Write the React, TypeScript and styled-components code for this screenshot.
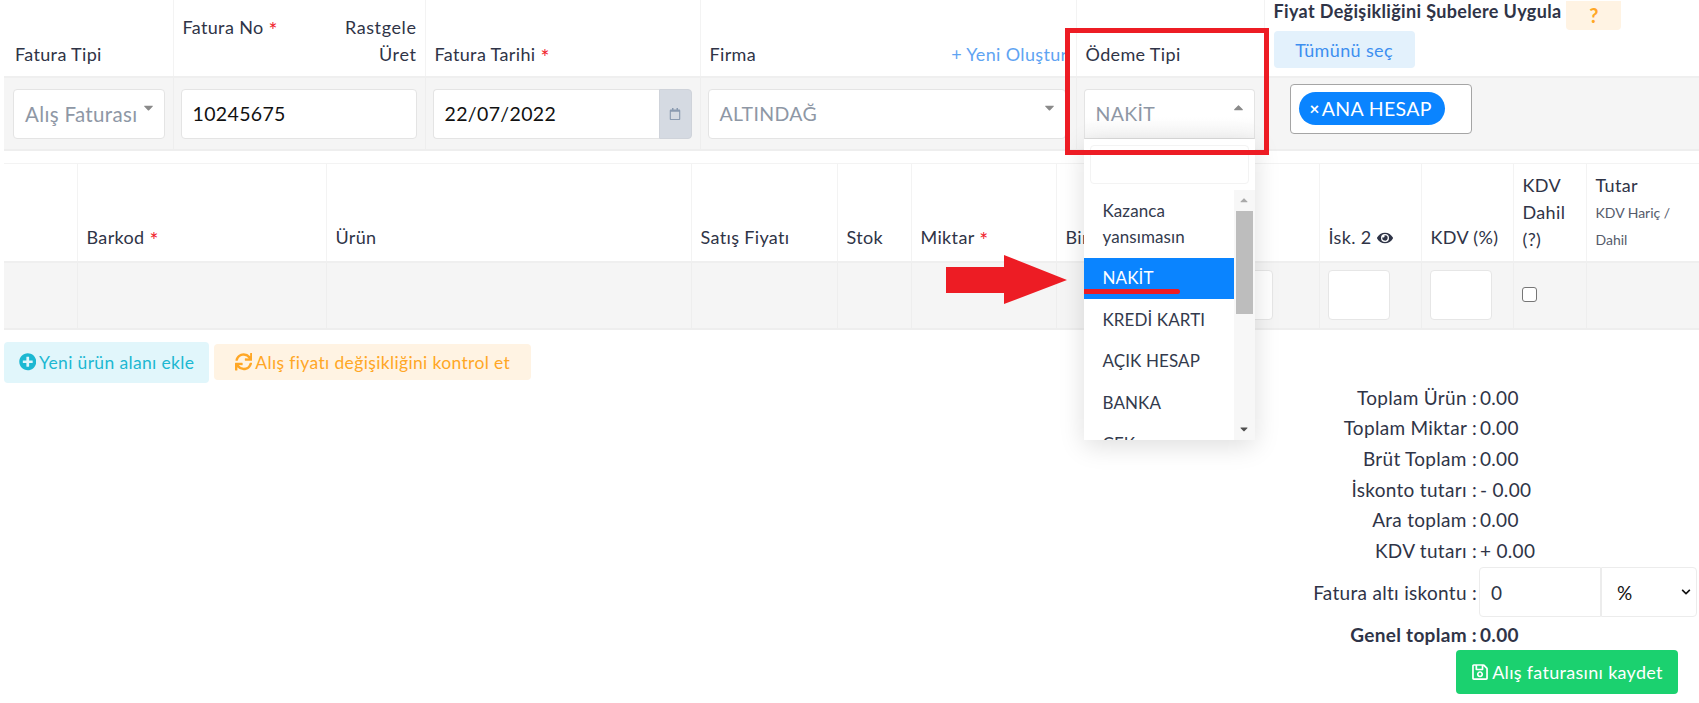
import React from 'react';
import styled, { createGlobalStyle } from 'styled-components';
import { FaPlusCircle, FaSync, FaEye, FaRegSave, FaRegCalendar, FaCaretDown, FaCaretUp, FaChevronDown } from 'react-icons/fa';

const GlobalStyle = createGlobalStyle`
    html, body {
        margin: 0;
        height: 703px;
        overflow: hidden;
        background: #fff;
    }
    body {
        font-family: 'Lato', 'Noto Sans', sans-serif;
        font-size: 17.5px;
        letter-spacing: 0.35px;
        color: #2f3447;
    }
    * { box-sizing: border-box; }
`
const Page = styled.div`
    position: relative;
    width: 1699px;
    height: 703px;
    padding-left: 4px;
`
const Table = styled.table<{ $mt?: number }>`
    table-layout: fixed;
    width: 1695px;
    border-collapse: collapse;
    margin-top: ${p => p.$mt ?? 0}px;
`
const HeadCell = styled.th<{ $h: number; $pb?: number; $noTop?: boolean }>`
    height: ${p => p.$h}px;
    padding: 0 8px ${p => p.$pb ?? 8}px 9px;
    text-align: left;
    vertical-align: bottom;
    font-weight: 400;
    font-size: 18px;
    line-height: 27px;
    border-left: 1px solid #f3f3f3;
    border-top: ${p => (p.$noTop ? 'none' : '1px solid #f3f3f3')};
    border-bottom: 2px solid #efefef;
    &:first-child {
        border-left: none;
        padding-left: 11px;
    }
`
const BodyCell = styled.td<{ $h: number; $pl?: number }>`
    height: ${p => p.$h}px;
    padding: 0 0 0 ${p => p.$pl ?? 7}px;
    background: #f5f5f5;
    border-left: 1px solid #eeeeee;
    border-bottom: 2px solid #eeeeee;
    vertical-align: middle;
    &:first-child {
        border-left: none;
        padding-left: 9px;
    }
`
const Req = styled.span`
    color: #f0212b;
    font-size: 21px;
    line-height: 0;
    vertical-align: -4px;
`
const Between = styled.div`
    display: flex;
    justify-content: space-between;
`
const FaturaNoHead = styled(Between)`
    align-items: flex-start;
    & > span:last-child { text-align: right; letter-spacing: 0.6px; }
`
const YeniLink = styled.span`
    color: #5fa4f2;
    white-space: nowrap;
`
const FieldBox = styled.div<{ $w: number; $fs?: number }>`
    position: relative;
    width: ${p => p.$w}px;
    height: 50px;
    background: #fff;
    border: 1px solid #e4e4e4;
    border-radius: 4px;
    display: flex;
    align-items: center;
    padding-left: 11px;
    font-size: ${p => p.$fs ?? 19.5}px;
    color: #111;
`
const SelectBox = styled(FieldBox)<{ $open?: boolean }>`
    color: #8e97a5;
    white-space: nowrap;
    background: ${p => (p.$open ? 'linear-gradient(#fff 55%, #f6f6f6)' : '#fff')};
    border-bottom-color: ${p => (p.$open ? '#dcdcdc' : '#e4e4e4')};
    border-radius: ${p => (p.$open ? '4px 4px 0 0' : '4px')};
`
const Caret = styled.span`
    position: absolute;
    right: 8px;
    top: 10px;
    font-size: 15px;
    line-height: 15px;
    color: #8a8a8a;
`
const DateGroup = styled.div`
    display: flex;
    width: 259px;
    height: 50px;
`
const DateInput = styled(FieldBox)`
    border-radius: 4px 0 0 4px;
    border-right: none;
    flex: 1;
`
const DateAddon = styled.div`
    width: 33px;
    background: #d5dae2;
    border: 1px solid #cfd3da;
    border-radius: 0 4px 4px 0;
    display: flex;
    align-items: center;
    justify-content: center;
    font-size: 12px;
    color: #8a9ab0;
`
const ApplyHead = styled.div`
    display: flex;
    align-items: flex-start;
    font-weight: 700;
    font-size: 18px;
    line-height: 20px;
    gap: 5px;
`
const QuestionBtn = styled.div`
    width: 55px;
    height: 29px;
    background: #fff3e3;
    color: #ffa726;
    border-radius: 0 0 4px 4px;
    text-align: center;
    font-weight: 700;
    font-size: 20px;
    line-height: 28px;
`
const SelectAllBtn = styled.div`
    width: 141px;
    height: 37px;
    margin-top: 1px;
    background: #e3f1fc;
    color: #3d8ff0;
    border-radius: 4px;
    display: flex;
    align-items: center;
    justify-content: center;
    font-weight: 400;
`
const ApplyCell = styled(HeadCell)`
    position: relative;
    line-height: 24px;
`
const MultiBox = styled.div`
    width: 182px;
    height: 50px;
    background: #fff;
    border: 1px solid #a5a5a5;
    border-radius: 4px;
    padding: 7px 8px;
    margin-top: -9px;
`
const Chip = styled.div`
    width: 146px;
    height: 33px;
    background: #0a84ff;
    color: #fff;
    border-radius: 17px;
    display: flex;
    align-items: center;
    padding-left: 11px;
    font-size: 19.5px;
    gap: 2px;
`
const ChipX = styled.span`
    font-size: 17px;
    font-weight: 700;
`
const Dropdown = styled.div`
    position: absolute;
    left: -1px;
    top: 49px;
    width: 171px;
    height: 301px;
    background: #fff;
    z-index: 5;
    box-shadow: 0 6px 24px rgba(0, 0, 0, 0.13);
    padding-top: 6px;
    display: flex;
    flex-direction: column;
    font-size: 17px;
`
const DropSearch = styled.div`
    height: 39px;
    margin: 0 6px;
    border: 1px solid #f3f3f3;
    border-radius: 4px;
    flex: none;
`
const DropBody = styled.div`
    margin-top: 6px;
    flex: 1;
    min-height: 0;
    display: flex;
`
const DropList = styled.div`
    flex: 1;
    overflow: hidden;
`
const DropItem = styled.div<{ $active?: boolean; $h?: number }>`
    height: ${p => p.$h ?? 41.5}px;
    padding: 0 0 0 19px;
    display: flex;
    align-items: center;
    line-height: 26px;
    letter-spacing: 0.1px;
    color: ${p => (p.$active ? '#fff' : '#333a4d')};
    background: ${p => (p.$active ? '#0a84ff' : '#fff')};
`
const ScrollTrack = styled.div`
    width: 21px;
    background: #f7f7f7;
    display: flex;
    flex-direction: column;
    align-items: center;
    font-size: 12px;
    color: #555;
`
const ScrollArrow = styled.div<{ $muted?: boolean }>`
    height: 21px;
    display: flex;
    align-items: center;
    justify-content: center;
    flex: none;
    color: ${p => (p.$muted ? '#a9a9a9' : '#505050')};
`
const ScrollThumb = styled.div`
    width: 17px;
    height: 103px;
    background: #bdbdbd;
    flex: none;
`
const ScrollRest = styled.div`
    flex: 1;
`
const Tiny = styled.div`
    font-size: 14px;
    letter-spacing: 0;
    color: #555b6b;
`
const EyeIcon = styled(FaEye)`
    font-size: 16px;
    vertical-align: -2px;
`
const SmallInput = styled.div<{ $w: number }>`
    width: ${p => p.$w}px;
    height: 50px;
    background: #fff;
    border: 1px solid #e6e6e6;
    border-radius: 4px;
`
const Check = styled.input`
    display: block;
    width: 15px;
    height: 15px;
    margin: -1px 0 0;
    appearance: none;
    background: #fff;
    border: 1px solid #767676;
    border-radius: 3px;
`
const Actions = styled.div`
    display: flex;
    align-items: center;
    gap: 5px;
    margin-top: 12px;
`
const SoftBtn = styled.div<{ $bg: string; $color: string; $w: number; $h: number }>`
    width: ${p => p.$w}px;
    height: ${p => p.$h}px;
    background: ${p => p.$bg};
    color: ${p => p.$color};
    border-radius: 4px;
    display: flex;
    align-items: center;
    justify-content: center;
    gap: 3px;
    white-space: nowrap;
`
const Totals = styled.div`
    display: grid;
    grid-template-columns: 226px 220px;
    margin-left: 1247px;
    margin-top: -1px;
    font-size: 19px;
    letter-spacing: 0.3px;
`
const TotalLabel = styled.div<{ $h: number; $bold?: boolean }>`
    height: ${p => p.$h}px;
    display: flex;
    align-items: center;
    justify-content: flex-end;
    white-space: nowrap;
    font-weight: ${p => (p.$bold ? 700 : 400)};
`
const TotalValue = styled(TotalLabel)`
    justify-content: flex-start;
    padding-left: 3px;
`
const DiscountInput = styled.div`
    width: 122px;
    height: 50px;
    padding-left: 11px;
    margin-left: -1px;
    display: flex;
    align-items: center;
    background: #fff;
    border: 1px solid #ececec;
    border-radius: 4px 0 0 4px;
`
const DiscountSelect = styled(DiscountInput)`
    width: 96px;
    margin-left: 0;
    padding: 0 5px 0 15px;
    justify-content: space-between;
    border-radius: 0 4px 4px 0;
    color: #111;
`
const SaveRow = styled.div`
    display: flex;
    grid-column: 1 / 3;
    padding-left: 205px;
`
const SaveBtn = styled.div`
    width: 222px;
    height: 44px;
    background: #1bd16f;
    color: #fff;
    border-radius: 4px;
    display: flex;
    align-items: center;
    justify-content: center;
    gap: 3px;
    font-size: 18px;
`
const RedFrame = styled.div`
    position: absolute;
    left: 1065px;
    top: 28px;
    width: 204px;
    height: 127px;
    border: 5px solid #ed1c24;
    z-index: 6;
`
const RedArrow = styled.svg`
    position: absolute;
    left: 946px;
    top: 255px;
    z-index: 6;
`
const RedLine = styled.div`
    position: absolute;
    left: 1084px;
    top: 289px;
    width: 96px;
    height: 5px;
    background: #ed1c24;
    border-radius: 0 3px 3px 0;
    z-index: 6;
`

const topCols = [169, 252, 275, 376, 188, 435];
const itemCols = [73, 249, 365, 146, 74, 145, 84, 179, 102, 92, 73, 113];

const totals = [
    { label: 'Toplam Ürün :', value: '0.00', h: 31 },
    { label: 'Toplam Miktar :', value: '0.00', h: 30.5 },
    { label: 'Brüt Toplam :', value: '0.00', h: 30.5 },
    { label: 'İskonto tutarı :', value: '- 0.00', h: 31 },
    { label: 'Ara toplam :', value: '0.00', h: 30.5 },
    { label: 'KDV tutarı :', value: '+ 0.00', h: 30.5 },
];

const App = () => {
    return (
        <Page>
            <GlobalStyle />
            <Table>
                <colgroup>
                    {topCols.map((w, i) => <col key={i} width={w} />)}
                </colgroup>
                <thead>
                    <tr>
                        <HeadCell $h={77} $noTop>Fatura Tipi</HeadCell>
                        <HeadCell $h={77} $noTop>
                            <FaturaNoHead>
                                <span>Fatura No <Req>*</Req></span>
                                <span>Rastgele<br />Üret</span>
                            </FaturaNoHead>
                        </HeadCell>
                        <HeadCell $h={77} $noTop>Fatura Tarihi <Req>*</Req></HeadCell>
                        <HeadCell $h={77} $noTop>
                            <Between>
                                <span>Firma</span>
                                <YeniLink>+ Yeni Oluştur</YeniLink>
                            </Between>
                        </HeadCell>
                        <HeadCell $h={77} $noTop>Ödeme Tipi</HeadCell>
                        <ApplyCell $h={77} $noTop>
                            <ApplyHead>
                                Fiyat Değişikliğini Şubelere Uygula
                                <QuestionBtn>?</QuestionBtn>
                            </ApplyHead>
                            <SelectAllBtn>Tümünü seç</SelectAllBtn>
                        </ApplyCell>
                    </tr>
                </thead>
                <tbody>
                    <tr>
                        <BodyCell $h={73}>
                            <SelectBox $w={152} $fs={20.5}>Alış Faturası<Caret><FaCaretDown /></Caret></SelectBox>
                        </BodyCell>
                        <BodyCell $h={73}>
                            <FieldBox $w={236}>10245675</FieldBox>
                        </BodyCell>
                        <BodyCell $h={73}>
                            <DateGroup>
                                <DateInput $w={226}>22/07/2022</DateInput>
                                <DateAddon><FaRegCalendar /></DateAddon>
                            </DateGroup>
                        </BodyCell>
                        <BodyCell $h={73}>
                            <SelectBox $w={358}>ALTINDAĞ<Caret><FaCaretDown /></Caret></SelectBox>
                        </BodyCell>
                        <BodyCell $h={73}>
                            <SelectBox $w={171} $open>
                                NAKİT
                                <Caret><FaCaretUp /></Caret>
                                <Dropdown>
                                    <DropSearch />
                                    <DropBody>
                                        <DropList>
                                            <DropItem $h={68}>Kazanca<br />yansımasın</DropItem>
                                            <DropItem $active>NAKİT</DropItem>
                                            <DropItem>KREDİ KARTI</DropItem>
                                            <DropItem>AÇIK HESAP</DropItem>
                                            <DropItem>BANKA</DropItem>
                                            <DropItem>ÇEK</DropItem>
                                        </DropList>
                                        <ScrollTrack>
                                            <ScrollArrow $muted><FaCaretUp /></ScrollArrow>
                                            <ScrollThumb />
                                            <ScrollRest />
                                            <ScrollArrow><FaCaretDown /></ScrollArrow>
                                        </ScrollTrack>
                                    </DropBody>
                                </Dropdown>
                            </SelectBox>
                        </BodyCell>
                        <BodyCell $h={73} $pl={25}>
                            <MultiBox>
                                <Chip><ChipX>×</ChipX>ANA HESAP</Chip>
                            </MultiBox>
                        </BodyCell>
                    </tr>
                </tbody>
            </Table>

            <Table $mt={12}>
                <colgroup>
                    {itemCols.map((w, i) => <col key={i} width={w} />)}
                </colgroup>
                <thead>
                    <tr>
                        <HeadCell $h={98} $pb={10} />
                        <HeadCell $h={98} $pb={10}>Barkod <Req>*</Req></HeadCell>
                        <HeadCell $h={98} $pb={10}>Ürün</HeadCell>
                        <HeadCell $h={98} $pb={10}>Satış Fiyatı</HeadCell>
                        <HeadCell $h={98} $pb={10}>Stok</HeadCell>
                        <HeadCell $h={98} $pb={10}>Miktar <Req>*</Req></HeadCell>
                        <HeadCell $h={98} $pb={10}>Birim</HeadCell>
                        <HeadCell $h={98} $pb={10} />
                        <HeadCell $h={98} $pb={10}>İsk. 2 <EyeIcon /></HeadCell>
                        <HeadCell $h={98} $pb={10}>KDV (%)</HeadCell>
                        <HeadCell $h={98} $pb={8}>KDV<br />Dahil<br />(?)</HeadCell>
                        <HeadCell $h={98} $pb={8}>Tutar<Tiny>KDV Hariç /<br />Dahil</Tiny></HeadCell>
                    </tr>
                </thead>
                <tbody>
                    <tr>
                        <BodyCell $h={67} />
                        <BodyCell $h={67} />
                        <BodyCell $h={67} />
                        <BodyCell $h={67} />
                        <BodyCell $h={67} />
                        <BodyCell $h={67} />
                        <BodyCell $h={67} />
                        <BodyCell $h={67} $pl={9}><SmallInput $w={123} /></BodyCell>
                        <BodyCell $h={67} $pl={8}><SmallInput $w={62} /></BodyCell>
                        <BodyCell $h={67} $pl={8}><SmallInput $w={62} /></BodyCell>
                        <BodyCell $h={67} $pl={8}><Check type="checkbox" readOnly /></BodyCell>
                        <BodyCell $h={67} />
                    </tr>
                </tbody>
            </Table>

            <Actions>
                <SoftBtn $bg="#e1f6fb" $color="#1cb8d2" $w={205} $h={41}>
                    <FaPlusCircle />Yeni ürün alanı ekle
                </SoftBtn>
                <SoftBtn $bg="#fff3e3" $color="#ffa726" $w={317} $h={36}>
                    <FaSync />Alış fiyatı değişikliğini kontrol et
                </SoftBtn>
            </Actions>

            <Totals>
                {totals.map(t => (
                    <React.Fragment key={t.label}>
                        <TotalLabel $h={t.h}>{t.label}</TotalLabel>
                        <TotalValue $h={t.h}>{t.value}</TotalValue>
                    </React.Fragment>
                ))}
                <TotalLabel $h={53}>Fatura altı iskontu :</TotalLabel>
                <TotalValue $h={53}>
                    <DiscountInput>0</DiscountInput>
                    <DiscountSelect>% <FaChevronDown size={10} /></DiscountSelect>
                </TotalValue>
                <TotalLabel $h={31} $bold>Genel toplam :</TotalLabel>
                <TotalValue $h={31} $bold>0.00</TotalValue>
                <SaveRow>
                    <SaveBtn><FaRegSave />Alış faturasını kaydet</SaveBtn>
                </SaveRow>
            </Totals>

            <RedFrame />
            <RedArrow width="121" height="49" viewBox="0 0 121 49">
                <polygon points="0,12 58,12 58,0 121,25 58,49 58,38 0,38" fill="#ed1c24" />
            </RedArrow>
            <RedLine />
        </Page>
    );
};

export default App;
